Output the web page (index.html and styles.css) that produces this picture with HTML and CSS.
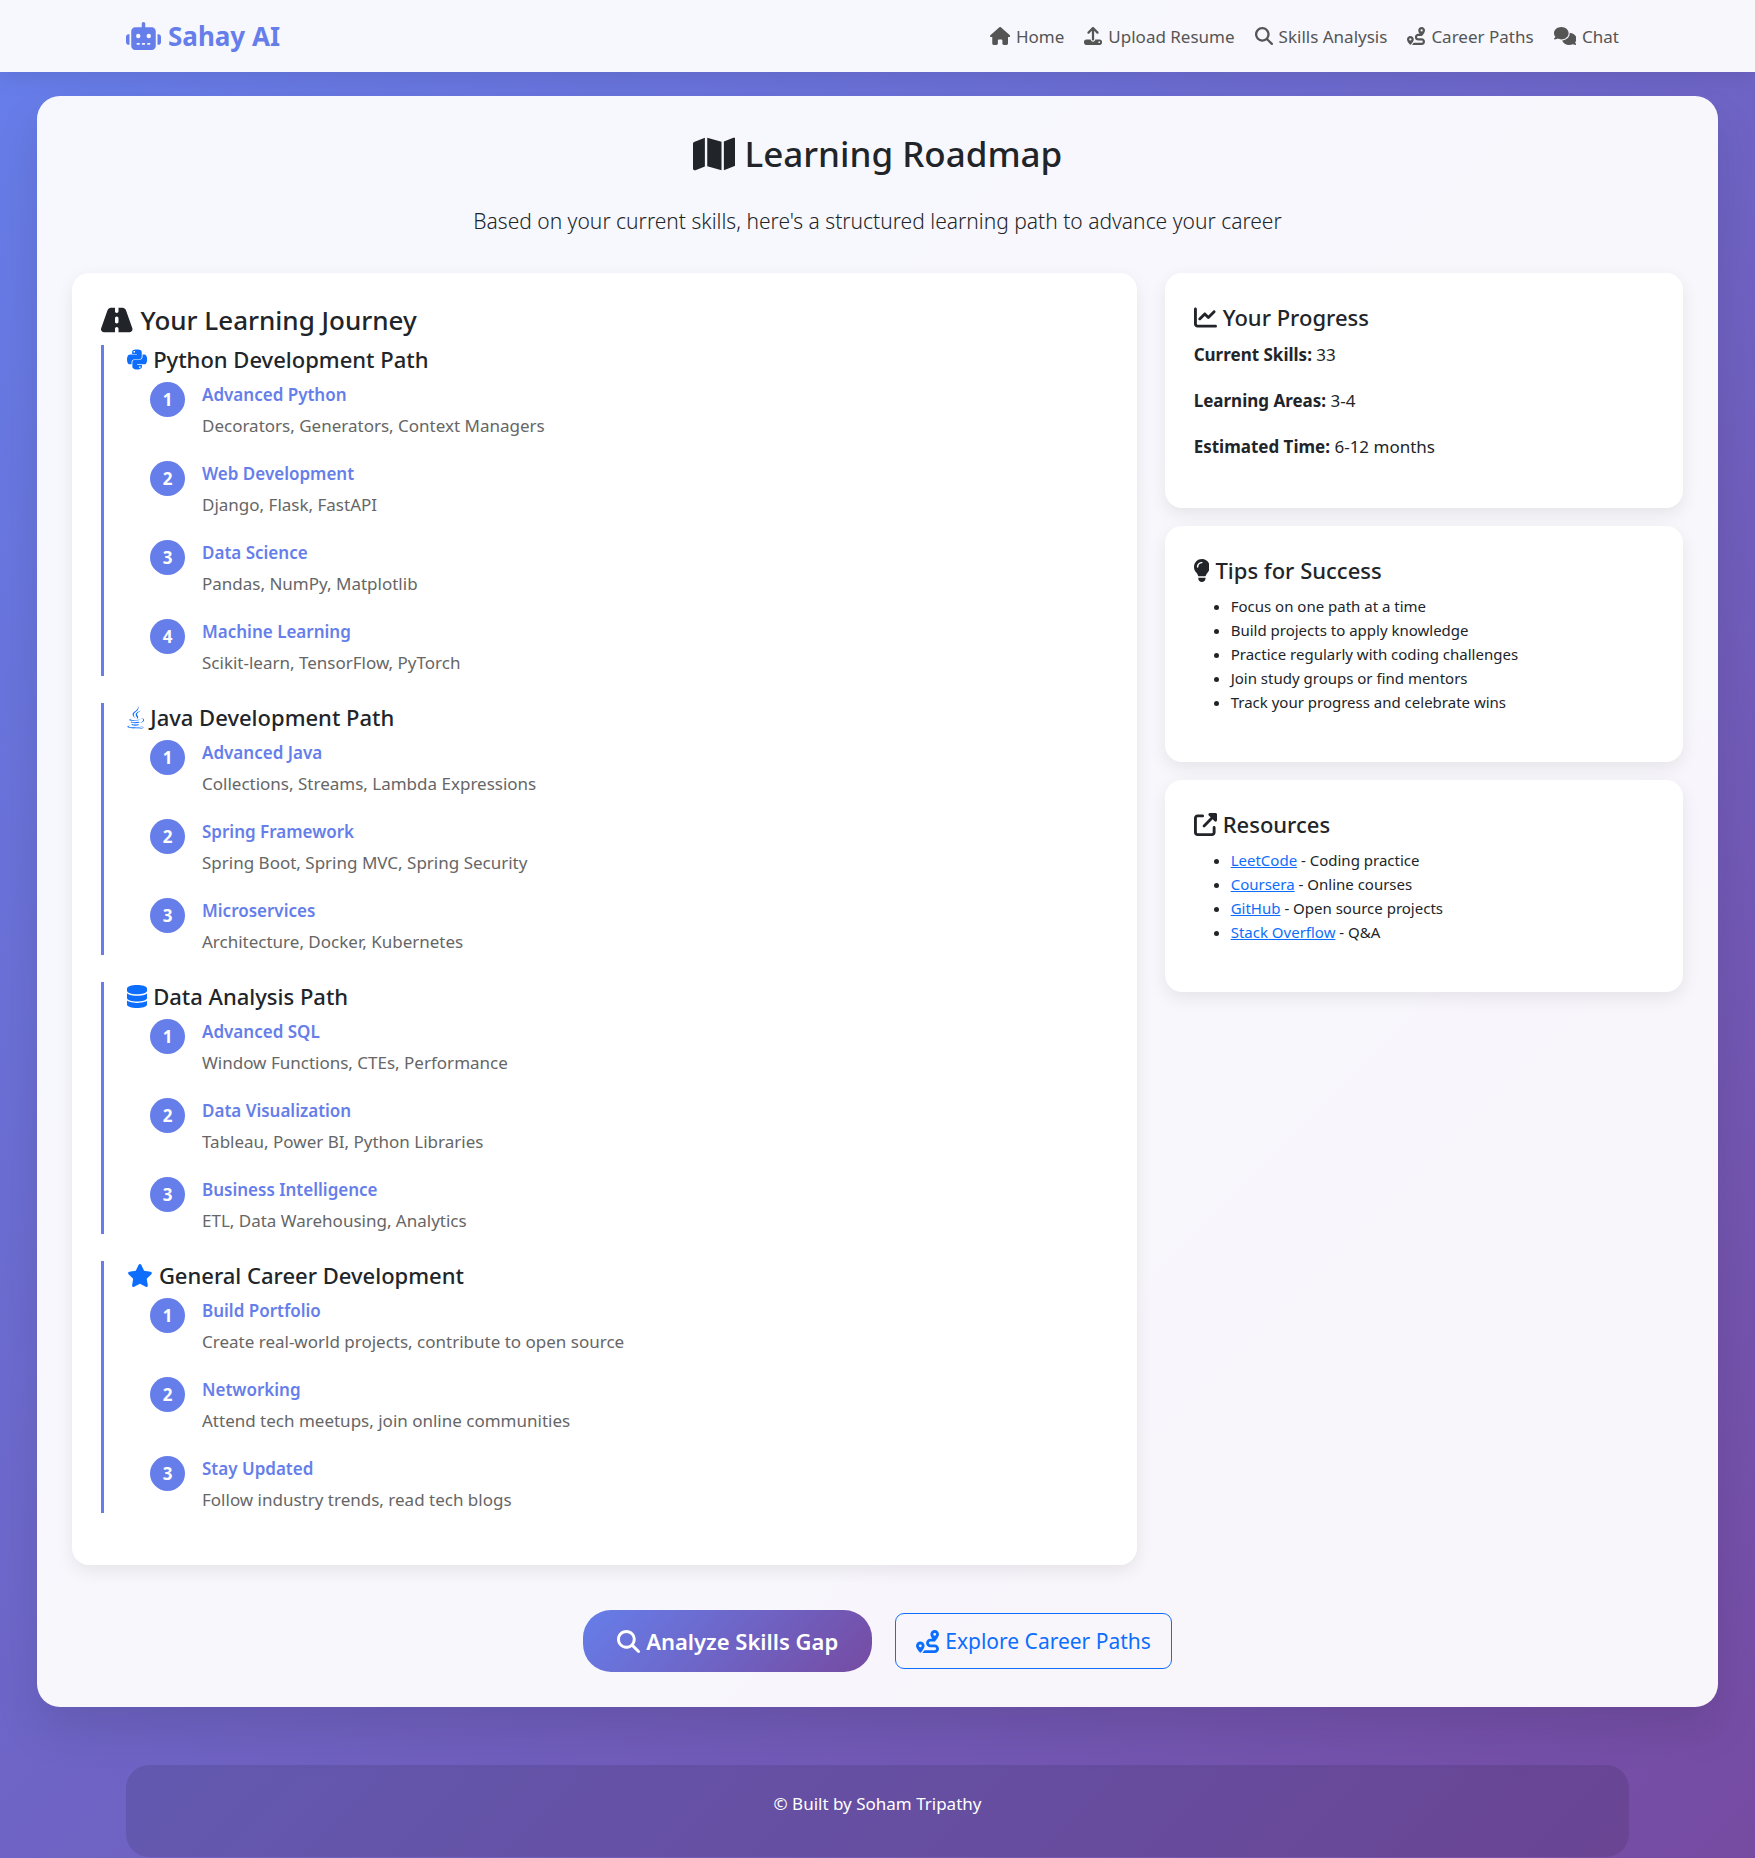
FILE: index.html
```html
<!DOCTYPE html>
<html lang="en">
<head>
<meta charset="utf-8">
<meta name="viewport" content="width=device-width, initial-scale=1">
<title>Learning Roadmap - Sahay AI</title>
<link rel="stylesheet" href="styles.css">
</head>
<body>
<svg class="sprite" aria-hidden="true">
  <symbol id="search" viewBox="0 0 512 512"><path d="M416 208c0 45.900-14.900 88.300-40 122.700L502.600 457.400c12.500 12.500 12.500 32.800 0 45.300s-32.800 12.500-45.300 0L330.700 376c-34.400 25.200-76.800 40-122.700 40C93.100 416 0 322.900 0 208S93.100 0 208 0S416 93.100 416 208zM208 352a144 144 0 1 0 0-288 144 144 0 1 0 0 288z"/></symbol>
  <symbol id="route" viewBox="0 0 512 512"><path d="M512 96c0 50.200-59.100 125.100-84.600 155c-3.800 4.400-9.400 6.100-14.500 5H320c-17.700 0-32 14.300-32 32s14.300 32 32 32h96c53 0 96 43 96 96s-43 96-96 96H139.600c8.700-9.900 19.300-22.600 30-36.800c6.300-8.400 12.800-17.600 19-27.200H416c17.700 0 32-14.300 32-32s-14.300-32-32-32H320c-53 0-96-43-96-96s43-96 96-96h39.800c-21-31.500-39.800-67.700-39.800-96c0-53 43-96 96-96s96 43 96 96zM117.100 489.100c-3.800 4.300-7.200 8.100-10.100 11.300l-1.800 2-.2-.2c-6 4.600-14.600 4-20-1.800C59.800 473 0 402.500 0 352c0-53 43-96 96-96s96 43 96 96c0 30-21.100 67-43.500 97.900c-10.700 14.700-21.700 28-30.800 38.500l-.6 .7zM128 352a32 32 0 1 0 -64 0 32 32 0 1 0 64 0zM416 128a32 32 0 1 0 0-64 32 32 0 1 0 0 64z"/></symbol>
</svg>

<header class="navbar">
  <div class="container navbar-inner">
    <a class="brand" href="#">
      <svg class="icon" viewBox="0 0 640 512" aria-hidden="true"><path d="M320 0c17.700 0 32 14.300 32 32V96H472c39.800 0 72 32.200 72 72V440c0 39.800-32.200 72-72 72H168c-39.800 0-72-32.200-72-72V168c0-39.800 32.200-72 72-72H288V32c0-17.700 14.300-32 32-32zM208 384c-8.800 0-16 7.200-16 16s7.200 16 16 16h32c8.800 0 16-7.200 16-16s-7.200-16-16-16H208zm96 0c-8.800 0-16 7.200-16 16s7.200 16 16 16h32c8.800 0 16-7.200 16-16s-7.200-16-16-16H304zm96 0c-8.800 0-16 7.200-16 16s7.200 16 16 16h32c8.800 0 16-7.200 16-16s-7.200-16-16-16H400zM264 256a40 40 0 1 0 -80 0 40 40 0 1 0 80 0zm152 40a40 40 0 1 0 0-80 40 40 0 1 0 0 80zM48 224H64V416H48c-26.500 0-48-21.500-48-48V272c0-26.500 21.500-48 48-48zm544 0c26.500 0 48 21.500 48 48v96c0 26.500-21.500 48-48 48H576V224h16z"/></svg>
      Sahay AI
    </a>
    <nav class="nav-links">
      <a href="#"><svg class="icon" viewBox="0 0 576 512" aria-hidden="true"><path d="M575.8 255.500c0 18-15 32.100-32 32.100h-32l.7 160.200c0 2.700-.2 5.400-.5 8.100V472c0 22.100-17.900 40-40 40H456c-1.100 0-2.200 0-3.300-.1c-1.400 .1-2.800 .1-4.200 .1H416 392c-22.100 0-40-17.900-40-40V448 384c0-17.700-14.300-32-32-32H256c-17.700 0-32 14.300-32 32v64 24c0 22.100-17.900 40-40 40H160 128.100c-1.500 0-3-.1-4.500-.2c-1.200 .1-2.400 .2-3.600 .2H104c-22.100 0-40-17.900-40-40V360c0-.9 0-1.900 .1-2.800V287.600H32c-18 0-32-14-32-32.100c0-9 3-17 10-24L266.400 8c7-7 15-8 22-8s15 2 21 7L564.800 231.500c8 7 12 15 11 24z"/></svg>Home</a>
      <a href="#"><svg class="icon" viewBox="0 0 512 512" aria-hidden="true"><path d="M288 109.300V352c0 17.700-14.300 32-32 32s-32-14.300-32-32V109.300l-73.400 73.400c-12.500 12.500-32.800 12.500-45.300 0s-12.500-32.800 0-45.300l128-128c12.500-12.500 32.800-12.500 45.300 0l128 128c12.500 12.500 12.500 32.800 0 45.300s-32.800 12.500-45.300 0L288 109.300zM64 352H192c0 35.300 28.700 64 64 64s64-28.700 64-64H448c35.300 0 64 28.700 64 64v32c0 35.300-28.700 64-64 64H64c-35.300 0-64-28.700-64-64V416c0-35.300 28.700-64 64-64zM432 456a24 24 0 1 0 0-48 24 24 0 1 0 0 48z"/></svg>Upload Resume</a>
      <a href="#"><svg class="icon" viewBox="0 0 512 512" aria-hidden="true"><use href="#search"/></svg>Skills Analysis</a>
      <a href="#"><svg class="icon" viewBox="0 0 512 512" aria-hidden="true"><use href="#route"/></svg>Career Paths</a>
      <a href="#"><svg class="icon" viewBox="0 0 640 512" aria-hidden="true"><path d="M208 352c114.900 0 208-78.800 208-176S322.900 0 208 0S0 78.800 0 176c0 38.600 14.700 74.300 39.600 103.400c-3.500 9.400-8.700 17.700-14.200 24.700c-4.800 6.200-9.700 11-13.300 14.300c-1.800 1.600-3.300 2.900-4.300 3.700c-.5 .4-.9 .7-1.100 .8l-.2 .2C1 327.200-1.400 334.400 .8 340.900S9.100 352 16 352c21.800 0 43.800-5.600 62.100-12.500c9.200-3.500 17.800-7.400 25.200-11.400C134.100 343.300 169.800 352 208 352zM448 176c0 112.300-99.100 196.900-216.500 207C255.800 457.400 336.400 512 432 512c38.200 0 73.900-8.700 104.700-23.900c7.500 4 16 7.900 25.200 11.400c18.300 6.900 40.300 12.500 62.100 12.500c6.900 0 13.100-4.500 15.200-11.100c2.100-6.600-.2-13.800-5.800-17.900l-.2-.2c-.2-.2-.6-.4-1.100-.8c-1-.8-2.500-2-4.300-3.700c-3.600-3.300-8.500-8.100-13.300-14.300c-5.500-7-10.700-15.400-14.200-24.700c24.900-29 39.600-64.700 39.600-103.400c0-92.800-84.900-168.900-192.600-175.500c.4 5.100 .6 10.300 .6 15.500z"/></svg>Chat</a>
    </nav>
  </div>
</header>

<main class="panel">
  <h1 class="page-title">
    <svg class="icon" viewBox="0 0 576 512" aria-hidden="true"><path d="M384 476.100L192 421.200V35.900L384 90.800V476.100zm32-1.200V88.400L543.100 37.500c15.800-6.300 32.900 5.300 32.900 22.300V394.600c0 9.800-6 18.600-15.100 22.300L416 474.800zM15.100 95.100L160 37.200V423.600L32.900 474.500C17.100 480.800 0 469.200 0 452.200V117.400c0-9.800 6-18.600 15.100-22.300z"/></svg>
    Learning Roadmap
  </h1>
  <p class="lead">Based on your current skills, here's a structured learning path to advance your career</p>

  <div class="columns">
    <section class="card journey">
      <h2 class="journey-title">
        <svg class="icon" viewBox="0 0 576 512" aria-hidden="true"><path d="M256 32H181.200c-27.100 0-51.300 17.100-60.300 42.600L3.100 407.200C1.100 413 0 419.200 0 425.400C0 455.500 24.500 480 54.600 480H256V416c0-17.700 14.300-32 32-32s32 14.300 32 32v64H521.400c30.200 0 54.600-24.500 54.600-54.600c0-6.200-1.100-12.400-3.100-18.200L455.100 74.600C446 49.100 421.900 32 394.800 32H320V96c0 17.700-14.300 32-32 32s-32-14.300-32-32V32zm64 192v64c0 17.700-14.300 32-32 32s-32-14.300-32-32V224c0-17.700 14.300-32 32-32s32 14.300 32 32z"/></svg>
        Your Learning Journey
      </h2>

      <section class="path">
        <h3 class="path-title">
          <svg class="icon" viewBox="0 0 448 512" aria-hidden="true"><path d="M439.8 200.500c-7.700-30.900-22.300-54.200-53.400-54.200h-40.100v47.400c0 36.800-31.200 67.800-66.800 67.800H172.700c-29.200 0-53.400 25-53.400 54.300v101.800c0 29 25.200 46 53.400 54.300 33.800 9.900 66.300 11.700 106.800 0 26.900-7.800 53.400-23.500 53.400-54.300v-40.700H226.200v-13.600h160.200c31.100 0 42.600-21.700 53.400-54.200 11.200-33.500 10.700-65.700 0-108.600zM286.200 404c11.100 0 20.100 9.100 20.100 20.300 0 11.300-9 20.400-20.100 20.400-11 0-20.100-9.200-20.100-20.400.1-11.300 9.100-20.300 20.100-20.300zM167.800 248.100h106.800c29.700 0 53.400-24.500 53.400-54.300V91.900c0-29-24.400-50.700-53.400-55.600-35.800-5.900-74.700-5.600-106.800.1-45.200 8-53.400 24.700-53.400 55.600v40.700h106.900v13.600h-147c-31.100 0-58.300 18.700-66.800 54.200-9.800 40.700-10.200 66.100 0 108.600 7.600 31.600 25.700 54.200 56.800 54.200H101v-48.800c0-35.300 30.500-66.400 66.800-66.400zm-6.700-142.600c-11.100 0-20.100-9.100-20.100-20.300.1-11.300 9-20.400 20.100-20.400 11 0 20.100 9.200 20.100 20.400s-9 20.300-20.100 20.300z"/></svg>
          Python Development Path
        </h3>
        <ol class="steps">
          <li><span class="num">1</span><div><h4>Advanced Python</h4><p>Decorators, Generators, Context Managers</p></div></li>
          <li><span class="num">2</span><div><h4>Web Development</h4><p>Django, Flask, FastAPI</p></div></li>
          <li><span class="num">3</span><div><h4>Data Science</h4><p>Pandas, NumPy, Matplotlib</p></div></li>
          <li><span class="num">4</span><div><h4>Machine Learning</h4><p>Scikit-learn, TensorFlow, PyTorch</p></div></li>
        </ol>
      </section>

      <section class="path">
        <h3 class="path-title">
          <svg class="icon" viewBox="0 0 384 512" aria-hidden="true"><path d="M277.740 312.900c9.800-6.700 23.400-12.500 23.400-12.500s-38.700 7-77.200 10.200c-47.100 3.900-97.700 4.700-123.100 1.300-60.100-8 33-30.100 33-30.100s-36.100-2.400-80.600 19c-52.500 25.400 130 37 224.500 12.100zm-85.400-32.100c-19-42.700-83.100-80.200 0-145.800C296 53.200 242.840 0 242.840 0c21.500 84.500-75.600 110.100-110.700 162.600-23.900 35.900 11.700 74.400 60.200 118.200zm114.600-176.200c.1 0-175.200 43.800-91.500 140.200 24.700 28.400-6.500 54-6.500 54s62.700-32.400 33.900-72.900c-26.900-37.800-47.500-56.600 64.100-121.300zm-6.100 270.500a12.190 12.190 0 0 1-2 2.600c128.300-33.700 81.100-118.900 19.800-97.300a17.330 17.330 0 0 0-8.200 6.300 70.450 70.450 0 0 1 11-3c31-6.500 75.500 41.500-20.600 91.400zM348 437.400s14.500 11.900-15.900 21.200c-57.900 17.500-240.800 22.800-291.600.7-18.300-7.900 16-19 26.800-21.300 11.200-2.400 17.700-2 17.700-2-20.300-14.300-131.300 28.100-56.400 40.200C232.840 509.400 401 461.300 348 437.400zM124.440 396c-78.700 22 47.900 67.400 148.100 24.500a185.890 185.890 0 0 1-28.200-13.800c-44.700 8.500-65.400 9.100-106 4.500-33.500-3.800-13.900-15.200-13.900-15.200zm179.800 97.200c-78.700 14.800-175.800 13.100-233.300 3.600 0-.1 11.800 9.700 72.400 13.600 92.200 5.900 233.800-3.300 237.100-46.900 0 0-6.400 16.500-76.200 29.700zM260.640 353c-59.200 11.400-93.500 11.100-136.800 6.600-33.500-3.500-11.600-19.700-11.600-19.700-86.800 28.800 48.200 61.400 169.500 25.900a60.370 60.370 0 0 1-21.100-12.800z"/></svg>
          Java Development Path
        </h3>
        <ol class="steps">
          <li><span class="num">1</span><div><h4>Advanced Java</h4><p>Collections, Streams, Lambda Expressions</p></div></li>
          <li><span class="num">2</span><div><h4>Spring Framework</h4><p>Spring Boot, Spring MVC, Spring Security</p></div></li>
          <li><span class="num">3</span><div><h4>Microservices</h4><p>Architecture, Docker, Kubernetes</p></div></li>
        </ol>
      </section>

      <section class="path">
        <h3 class="path-title">
          <svg class="icon" viewBox="0 0 448 512" aria-hidden="true"><path d="M448 80v48c0 44.200-100.300 80-224 80S0 172.200 0 128V80C0 35.800 100.300 0 224 0S448 35.800 448 80zM393.200 214.700c20.800-7.400 39.900-16.900 54.800-28.600V288c0 44.200-100.300 80-224 80S0 332.200 0 288V186.100c14.900 11.800 34 21.200 54.800 28.600C99.700 230.700 159.500 240 224 240s124.300-9.300 169.200-25.300zM0 346.100c14.900 11.800 34 21.200 54.800 28.600C99.700 390.700 159.500 400 224 400s124.300-9.300 169.200-25.300c20.800-7.400 39.900-16.900 54.800-28.600V432c0 44.200-100.300 80-224 80S0 476.200 0 432V346.100z"/></svg>
          Data Analysis Path
        </h3>
        <ol class="steps">
          <li><span class="num">1</span><div><h4>Advanced SQL</h4><p>Window Functions, CTEs, Performance</p></div></li>
          <li><span class="num">2</span><div><h4>Data Visualization</h4><p>Tableau, Power BI, Python Libraries</p></div></li>
          <li><span class="num">3</span><div><h4>Business Intelligence</h4><p>ETL, Data Warehousing, Analytics</p></div></li>
        </ol>
      </section>

      <section class="path">
        <h3 class="path-title">
          <svg class="icon" viewBox="0 0 576 512" aria-hidden="true"><path d="M316.900 18C311.600 7 300.400 0 288.100 0s-23.400 7-28.800 18L195 150.300 51.400 171.500c-12 1.800-22 10.200-25.700 21.700s-.7 24.200 7.900 32.700L137.800 329 113.200 474.700c-2 12 3 24.200 12.900 31.300s23 8 33.800 2.300l128.300-68.500 128.300 68.500c10.800 5.700 23.900 4.900 33.800-2.300s14.900-19.300 12.900-31.300L438.500 329 542.700 225.900c8.600-8.500 11.700-21.200 7.900-32.700s-13.700-19.900-25.700-21.700L381.200 150.300 316.900 18z"/></svg>
          General Career Development
        </h3>
        <ol class="steps">
          <li><span class="num">1</span><div><h4>Build Portfolio</h4><p>Create real-world projects, contribute to open source</p></div></li>
          <li><span class="num">2</span><div><h4>Networking</h4><p>Attend tech meetups, join online communities</p></div></li>
          <li><span class="num">3</span><div><h4>Stay Updated</h4><p>Follow industry trends, read tech blogs</p></div></li>
        </ol>
      </section>
    </section>

    <aside class="sidebar">
      <section class="card">
        <h2 class="card-title">
          <svg class="icon" viewBox="0 0 512 512" aria-hidden="true"><path d="M64 64c0-17.700-14.300-32-32-32S0 46.300 0 64V400c0 44.200 35.800 80 80 80H480c17.700 0 32-14.300 32-32s-14.300-32-32-32H80c-8.800 0-16-7.200-16-16V64zm406.600 86.600c12.500-12.500 12.500-32.800 0-45.300s-32.800-12.500-45.300 0L320 210.700l-57.400-57.400c-12.500-12.500-32.800-12.500-45.300 0l-112 112c-12.500 12.500-12.500 32.800 0 45.300s32.800 12.500 45.300 0L240 221.300l57.400 57.400c12.500 12.500 32.800 12.500 45.300 0l128-128z"/></svg>
          Your Progress
        </h2>
        <p class="stat"><strong>Current Skills:</strong> 33</p>
        <p class="stat"><strong>Learning Areas:</strong> 3-4</p>
        <p class="stat"><strong>Estimated Time:</strong> 6-12 months</p>
      </section>
      <section class="card">
        <h2 class="card-title">
          <svg class="icon" viewBox="16 0 352 512" aria-hidden="true"><path d="M272 384c9.600-31.900 29.500-59.100 49.200-86.200l0 0c5.200-7.100 10.400-14.200 15.400-21.400c19.800-28.500 31.400-63 31.400-100.300C368 78.800 289.200 0 192 0S16 78.800 16 176c0 37.300 11.600 71.900 31.400 100.300c5 7.200 10.200 14.300 15.400 21.400l0 0c19.800 27.100 39.700 54.400 49.200 86.200H272zM192 512c44.200 0 80-35.800 80-80V416H112v16c0 44.200 35.800 80 80 80zM112 176c0 8.800-7.200 16-16 16s-16-7.200-16-16c0-61.900 50.100-112 112-112c8.800 0 16 7.200 16 16s-7.200 16-16 16c-44.200 0-80 35.800-80 80z"/></svg>
          Tips for Success
        </h2>
        <ul class="bullets">
          <li>Focus on one path at a time</li>
          <li>Build projects to apply knowledge</li>
          <li>Practice regularly with coding challenges</li>
          <li>Join study groups or find mentors</li>
          <li>Track your progress and celebrate wins</li>
        </ul>
      </section>
      <section class="card">
        <h2 class="card-title">
          <svg class="icon" viewBox="0 0 512 512" aria-hidden="true"><path d="M352 0c-12.900 0-24.600 7.800-29.600 19.800s-2.200 25.700 6.900 34.900L370.700 96 201.400 265.400c-12.500 12.500-12.500 32.800 0 45.300s32.800 12.500 45.300 0L416 141.300l41.400 41.400c9.200 9.200 22.900 11.900 34.900 6.900s19.800-16.600 19.800-29.600V32c0-17.700-14.300-32-32-32H352zM80 32C35.800 32 0 67.800 0 112V432c0 44.200 35.800 80 80 80H400c44.200 0 80-35.800 80-80V320c0-17.700-14.300-32-32-32s-32 14.300-32 32V432c0 8.800-7.200 16-16 16H80c-8.800 0-16-7.200-16-16V112c0-8.800 7.200-16 16-16H192c17.700 0 32-14.300 32-32s-14.300-32-32-32H80z"/></svg>
          Resources
        </h2>
        <ul class="bullets">
          <li><a href="#">LeetCode</a> - Coding practice</li>
          <li><a href="#">Coursera</a> - Online courses</li>
          <li><a href="#">GitHub</a> - Open source projects</li>
          <li><a href="#">Stack Overflow</a> - Q&amp;A</li>
        </ul>
      </section>
    </aside>
  </div>

  <div class="actions">
    <button class="btn btn-gradient" type="button"><svg class="icon" viewBox="0 0 512 512" aria-hidden="true"><use href="#search"/></svg>Analyze Skills Gap</button>
    <button class="btn btn-outline" type="button"><svg class="icon" viewBox="0 0 512 512" aria-hidden="true"><use href="#route"/></svg>Explore Career Paths</button>
  </div>
</main>

<footer class="container footer">
  <p>© Built by Soham Tripathy</p>
</footer>
</body>
</html>
```
FILE: styles.css
```css
*,
*::before,
*::after {
  box-sizing: border-box;
}

body {
  margin: 0;
  min-height: 100vh;
  background: linear-gradient(135deg, #667eea 0%, #764ba2 100%);
  color: #212529;
  font-family: "Noto Sans", "Open Sans", sans-serif;
  font-size: 17px;
  line-height: 27px;
}

h1, h2, h3, h4, p, ul, ol {
  margin: 0;
  padding: 0;
  font-weight: inherit;
}

.sprite {
  display: none;
}

.icon {
  flex: none;
  width: auto;
  height: 23px;
  fill: currentColor;
}

.container {
  width: calc(100% - 48px);
  max-width: 1503px;
  margin: 0 auto;
}

/* Navbar */
.navbar {
  background: rgba(255, 255, 255, 0.95);
  box-shadow: 0 2px 23px rgba(0, 0, 0, 0.1);
}

.navbar-inner {
  display: flex;
  align-items: center;
  justify-content: space-between;
  flex-wrap: wrap;
  min-height: 72px;
}

.brand {
  display: flex;
  align-items: center;
  gap: 7px;
  color: #667eea;
  font-size: 26px;
  font-weight: 700;
  line-height: 40px;
  text-decoration: none;
}

.brand .icon {
  height: 28px;
}

.nav-links {
  display: flex;
  flex-wrap: wrap;
}

.nav-links a {
  display: flex;
  align-items: center;
  gap: 6px;
  padding: 9px 10px;
  color: #555;
  text-decoration: none;
}

.nav-links .icon {
  height: 18px;
}

/* Main panel */
.panel {
  margin: 24px 37px 58px;
  padding: 36px 35px 35px;
  border-radius: 23px;
  background: rgba(255, 255, 255, 0.95);
  box-shadow: 0 23px 46px rgba(0, 0, 0, 0.1);
}

.page-title {
  display: flex;
  align-items: center;
  justify-content: center;
  gap: 9px;
  margin-bottom: 27px;
  font-size: 35px;
  font-weight: 500;
  line-height: 44px;
}

.page-title .icon {
  height: 38px;
}

.lead {
  margin-bottom: 34px;
  font-size: 21px;
  font-weight: 300;
  line-height: 36px;
  text-align: center;
}

.columns {
  display: grid;
  grid-template-columns: repeat(12, 1fr);
  column-gap: 28px;
  align-items: start;
}

.journey {
  grid-column: span 8;
}

.sidebar {
  grid-column: span 4;
  display: flex;
  flex-direction: column;
  gap: 18px;
}

.card {
  padding: 29px;
  border-radius: 17px;
  background: #fff;
  box-shadow: 0 6px 17px rgba(0, 0, 0, 0.08);
}

.card.journey {
  padding-bottom: 25px;
}

.journey-title {
  display: flex;
  align-items: center;
  gap: 8px;
  margin-bottom: 7px;
  font-size: 26px;
  font-weight: 500;
  line-height: 36px;
}

.journey-title .icon {
  height: 28px;
}

/* Learning paths */
.path {
  margin-bottom: 27px;
  padding-left: 23px;
  border-left: 3px solid #667eea;
}

.path-title {
  display: flex;
  align-items: center;
  gap: 6px;
  margin-bottom: 9px;
  font-size: 22px;
  font-weight: 500;
  line-height: 28px;
}

.path-title .icon {
  color: #0d6efd;
}

.steps {
  display: flex;
  flex-direction: column;
  gap: 22px;
  padding-left: 23px;
  list-style: none;
}

.steps li {
  display: flex;
  align-items: flex-start;
  gap: 17px;
}

.num {
  flex: none;
  width: 35px;
  height: 35px;
  border-radius: 50%;
  background: #667eea;
  color: #fff;
  font-weight: 700;
  line-height: 35px;
  text-align: center;
}

.steps h4 {
  margin-bottom: 4px;
  color: #667eea;
  font-size: 17px;
  font-weight: 600;
  line-height: 26px;
}

.steps p {
  color: #666;
}

/* Sidebar cards */
.card-title {
  display: flex;
  align-items: center;
  gap: 6px;
  margin-bottom: 9px;
  font-size: 22px;
  font-weight: 500;
  line-height: 30px;
}

.stat {
  margin-bottom: 19px;
}

.stat strong {
  font-weight: 700;
}

.bullets {
  margin-bottom: 19px;
  padding-left: 37px;
  font-size: 15px;
  line-height: 24px;
}

.bullets a {
  color: #0d6efd;
}

/* Actions */
.actions {
  display: flex;
  align-items: center;
  justify-content: center;
  flex-wrap: wrap;
  gap: 23px;
  margin-top: 45px;
}

.btn {
  display: flex;
  align-items: center;
  gap: 6px;
  font-family: inherit;
  font-size: 22px;
  line-height: 34px;
  cursor: pointer;
}

.btn-gradient {
  padding: 14px 34px;
  border: 0;
  border-radius: 28px;
  background: linear-gradient(135deg, #667eea 0%, #764ba2 100%);
  color: #fff;
  font-weight: 600;
}

.btn-outline {
  padding: 10px 20px;
  border: 1px solid #0d6efd;
  border-radius: 9px;
  background: transparent;
  color: #0d6efd;
  font-size: 21px;
}

/* Footer */
.footer {
  padding: 25px 23px 40px;
  border-radius: 23px;
  background: rgba(0, 0, 0, 0.1);
  color: #fff;
  text-align: center;
}
```
